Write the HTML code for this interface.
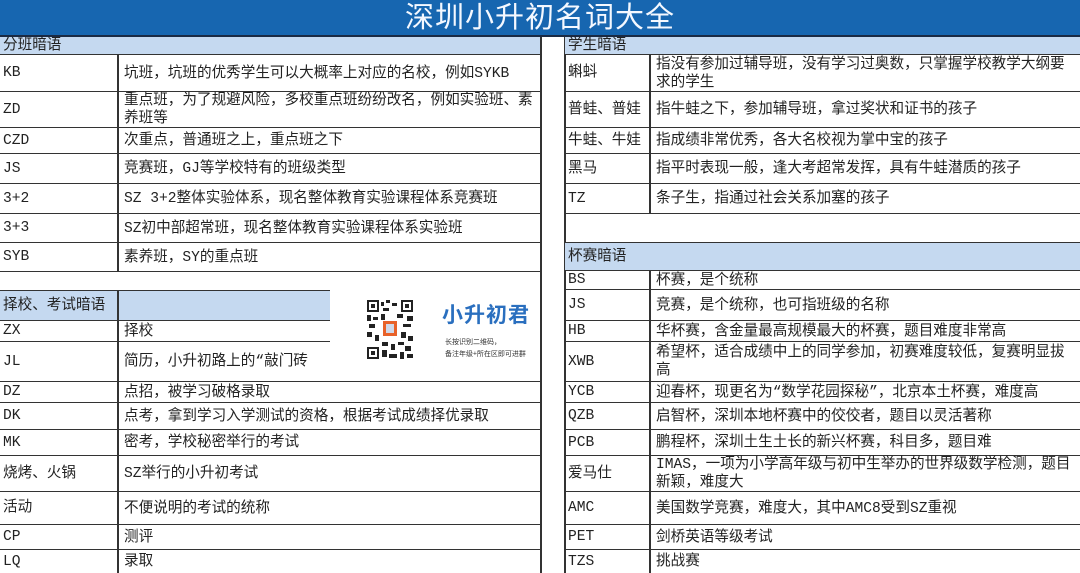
<!DOCTYPE html>
<html><head><meta charset="utf-8"><style>
*{margin:0;padding:0;box-sizing:border-box}
body{width:1080px;height:573px;overflow:hidden;background:#fff;position:relative;font-family:"Liberation Mono","Noto Sans CJK SC",monospace;font-size:14.6px;color:#222}
.t{position:absolute;left:0;top:0;width:1080px;height:37px;background:#1766b0;border-bottom:2px solid #1a2a44;color:#f4f8ff;font-family:"Liberation Sans","Noto Sans CJK SC",sans-serif;font-size:29px;text-align:center;line-height:36px;letter-spacing:1px}
.c{position:absolute;border-bottom:1.5px solid #333;display:flex;align-items:center;line-height:18px;padding-left:3px;white-space:nowrap}
.h{background:#c5d9f0}
.v{position:absolute;width:1.5px;background:#333}
</style></head><body>
<div class="t">深圳小升初名词大全</div>

<div class="c h" style="left:0;top:37px;width:540px;height:18px">分班暗语</div>
<div class="c" style="left:0;top:55px;width:540px;height:37px">KB</div>
<div class="c" style="left:0;top:92px;width:540px;height:36px">ZD</div>
<div class="c" style="left:0;top:128px;width:540px;height:26px">CZD</div>
<div class="c" style="left:0;top:154px;width:540px;height:30px">JS</div>
<div class="c" style="left:0;top:184px;width:540px;height:30px">3+2</div>
<div class="c" style="left:0;top:214px;width:540px;height:29px">3+3</div>
<div class="c" style="left:0;top:243px;width:540px;height:29px">SYB</div>
<div class="v" style="left:117px;top:55px;height:217px"></div>
<div class="c" style="left:121px;top:55px;height:37px;border:0">坑班，坑班的优秀学生可以大概率上对应的名校，例如SYKB</div>
<div class="c" style="left:121px;top:92px;height:36px;border:0;white-space:normal;width:418px">重点班，为了规避风险，多校重点班纷纷改名，例如实验班、素养班等</div>
<div class="c" style="left:121px;top:128px;height:26px;border:0">次重点，普通班之上，重点班之下</div>
<div class="c" style="left:121px;top:154px;height:30px;border:0">竞赛班，GJ等学校特有的班级类型</div>
<div class="c" style="left:121px;top:184px;height:30px;border:0">SZ 3+2整体实验体系，现名整体教育实验课程体系竞赛班</div>
<div class="c" style="left:121px;top:214px;height:29px;border:0">SZ初中部超常班，现名整体教育实验课程体系实验班</div>
<div class="c" style="left:121px;top:243px;height:29px;border:0">素养班，SY的重点班</div>

<div class="c h" style="left:0;top:290px;width:330px;height:31px;border-top:1.5px solid #333">择校、考试暗语</div>
<div class="c" style="left:0;top:321px;width:330px;height:21px">ZX</div>
<div class="c" style="left:0;top:342px;width:540px;height:40px">JL</div>
<div class="c" style="left:0;top:382px;width:540px;height:21px">DZ</div>
<div class="c" style="left:0;top:403px;width:540px;height:27px">DK</div>
<div class="c" style="left:0;top:430px;width:540px;height:26px">MK</div>
<div class="c" style="left:0;top:456px;width:540px;height:36px">烧烤、火锅</div>
<div class="c" style="left:0;top:492px;width:540px;height:33px">活动</div>
<div class="c" style="left:0;top:525px;width:540px;height:25px">CP</div>
<div class="c" style="left:0;top:550px;width:540px;height:23px;border:0">LQ</div>
<div class="v" style="left:117px;top:290px;height:283px"></div>
<div class="c" style="left:121px;top:321px;height:21px;border:0">择校</div>
<div class="c" style="left:121px;top:342px;height:40px;border:0">简历，小升初路上的“敲门砖</div>
<div class="c" style="left:121px;top:382px;height:21px;border:0">点招，被学习破格录取</div>
<div class="c" style="left:121px;top:403px;height:27px;border:0">点考，拿到学习入学测试的资格，根据考试成绩择优录取</div>
<div class="c" style="left:121px;top:430px;height:26px;border:0">密考，学校秘密举行的考试</div>
<div class="c" style="left:121px;top:456px;height:36px;border:0">SZ举行的小升初考试</div>
<div class="c" style="left:121px;top:492px;height:33px;border:0">不便说明的考试的统称</div>
<div class="c" style="left:121px;top:525px;height:25px;border:0">测评</div>
<div class="c" style="left:121px;top:550px;height:23px;border:0">录取</div>

<svg style="position:absolute;left:367px;top:300px" width="46" height="59" viewBox="0 0 46 59">
<rect width="46" height="59" fill="#fff"/>
<g fill="#222">
<rect x="0" y="0" width="12" height="12"/><rect x="34" y="0" width="12" height="12"/><rect x="0" y="47" width="12" height="12"/>
<rect x="14" y="2" width="3" height="4"/><rect x="19" y="0" width="4" height="3"/><rect x="25" y="3" width="5" height="3"/><rect x="16" y="8" width="6" height="3"/>
<rect x="0" y="15" width="4" height="6"/><rect x="6" y="17" width="5" height="3"/><rect x="14" y="14" width="4" height="6"/><rect x="30" y="14" width="6" height="4"/><rect x="40" y="16" width="6" height="5"/>
<rect x="2" y="24" width="6" height="4"/><rect x="36" y="24" width="8" height="3"/><rect x="0" y="32" width="5" height="5"/><rect x="8" y="35" width="4" height="6"/><rect x="34" y="32" width="5" height="6"/><rect x="41" y="36" width="5" height="5"/>
<rect x="15" y="42" width="6" height="4"/><rect x="24" y="44" width="4" height="6"/><rect x="31" y="42" width="6" height="3"/><rect x="38" y="46" width="6" height="5"/><rect x="15" y="50" width="5" height="7"/><rect x="22" y="54" width="8" height="4"/><rect x="33" y="52" width="4" height="7"/><rect x="40" y="54" width="6" height="4"/>
</g>
<g fill="#fff"><rect x="2" y="2" width="8" height="8"/><rect x="36" y="2" width="8" height="8"/><rect x="2" y="49" width="8" height="8"/></g>
<g fill="#222"><rect x="4" y="4" width="4" height="4"/><rect x="38" y="4" width="4" height="4"/><rect x="4" y="51" width="4" height="4"/></g>
<rect x="16" y="21" width="14" height="15" fill="#e8622a"/><rect x="19" y="24" width="8" height="9" fill="#cfd9ea"/>
</svg>
<div style="position:absolute;left:442px;top:301px;font-family:'Noto Sans CJK SC',sans-serif;font-weight:bold;font-size:21px;color:#2a6fbf;line-height:26px;letter-spacing:1px">小升初君</div>
<div style="position:absolute;left:445px;top:336px;font-family:'Noto Sans CJK SC',sans-serif;font-size:7px;color:#333;line-height:12px">长按识别二维码，<br>备注年级+所在区即可进群</div>

<div class="v" style="left:540px;top:37px;height:536px"></div>
<div class="v" style="left:564px;top:37px;height:536px"></div>

<div class="c h" style="left:565px;top:37px;width:515px;height:18px">学生暗语</div>
<div class="c" style="left:565px;top:55px;width:515px;height:37px">蝌蚪</div>
<div class="c" style="left:565px;top:92px;width:515px;height:36px">普蛙、普娃</div>
<div class="c" style="left:565px;top:128px;width:515px;height:26px">牛蛙、牛娃</div>
<div class="c" style="left:565px;top:154px;width:515px;height:30px">黑马</div>
<div class="c" style="left:565px;top:184px;width:515px;height:30px">TZ</div>
<div class="c" style="left:565px;top:214px;width:515px;height:29px"></div>
<div class="c h" style="left:565px;top:243px;width:515px;height:28px">杯赛暗语</div>
<div class="c" style="left:565px;top:271px;width:515px;height:19px">BS</div>
<div class="c" style="left:565px;top:290px;width:515px;height:31px">JS</div>
<div class="c" style="left:565px;top:321px;width:515px;height:21px">HB</div>
<div class="c" style="left:565px;top:342px;width:515px;height:40px">XWB</div>
<div class="c" style="left:565px;top:382px;width:515px;height:21px">YCB</div>
<div class="c" style="left:565px;top:403px;width:515px;height:27px">QZB</div>
<div class="c" style="left:565px;top:430px;width:515px;height:26px">PCB</div>
<div class="c" style="left:565px;top:456px;width:515px;height:36px">爱马仕</div>
<div class="c" style="left:565px;top:492px;width:515px;height:33px">AMC</div>
<div class="c" style="left:565px;top:525px;width:515px;height:25px">PET</div>
<div class="c" style="left:565px;top:550px;width:515px;height:23px;border:0">TZS</div>
<div class="v" style="left:649px;top:55px;height:159px"></div>
<div class="v" style="left:649px;top:271px;height:302px"></div>
<div class="c" style="left:653px;top:55px;height:37px;border:0;white-space:normal;width:415px">指没有参加过辅导班，没有学习过奥数，只掌握学校教学大纲要求的学生</div>
<div class="c" style="left:653px;top:92px;height:36px;border:0">指牛蛙之下，参加辅导班，拿过奖状和证书的孩子</div>
<div class="c" style="left:653px;top:128px;height:26px;border:0">指成绩非常优秀，各大名校视为掌中宝的孩子</div>
<div class="c" style="left:653px;top:154px;height:30px;border:0">指平时表现一般，逢大考超常发挥，具有牛蛙潜质的孩子</div>
<div class="c" style="left:653px;top:184px;height:30px;border:0">条子生，指通过社会关系加塞的孩子</div>
<div class="c" style="left:653px;top:271px;height:19px;border:0">杯赛，是个统称</div>
<div class="c" style="left:653px;top:290px;height:31px;border:0">竞赛，是个统称，也可指班级的名称</div>
<div class="c" style="left:653px;top:321px;height:21px;border:0">华杯赛，含金量最高规模最大的杯赛，题目难度非常高</div>
<div class="c" style="left:653px;top:342px;height:40px;border:0;white-space:normal;width:415px">希望杯，适合成绩中上的同学参加，初赛难度较低，复赛明显拔高</div>
<div class="c" style="left:653px;top:382px;height:21px;border:0">迎春杯，现更名为“数学花园探秘”，北京本土杯赛，难度高</div>
<div class="c" style="left:653px;top:403px;height:27px;border:0">启智杯，深圳本地杯赛中的佼佼者，题目以灵活著称</div>
<div class="c" style="left:653px;top:430px;height:26px;border:0">鹏程杯，深圳土生土长的新兴杯赛，科目多，题目难</div>
<div class="c" style="left:653px;top:456px;height:36px;border:0;white-space:normal;width:420px">IMAS，一项为小学高年级与初中生举办的世界级数学检测，题目新颖，难度大</div>
<div class="c" style="left:653px;top:492px;height:33px;border:0">美国数学竞赛，难度大，其中AMC8受到SZ重视</div>
<div class="c" style="left:653px;top:525px;height:25px;border:0">剑桥英语等级考试</div>
<div class="c" style="left:653px;top:550px;height:23px;border:0">挑战赛</div>
</body></html>
